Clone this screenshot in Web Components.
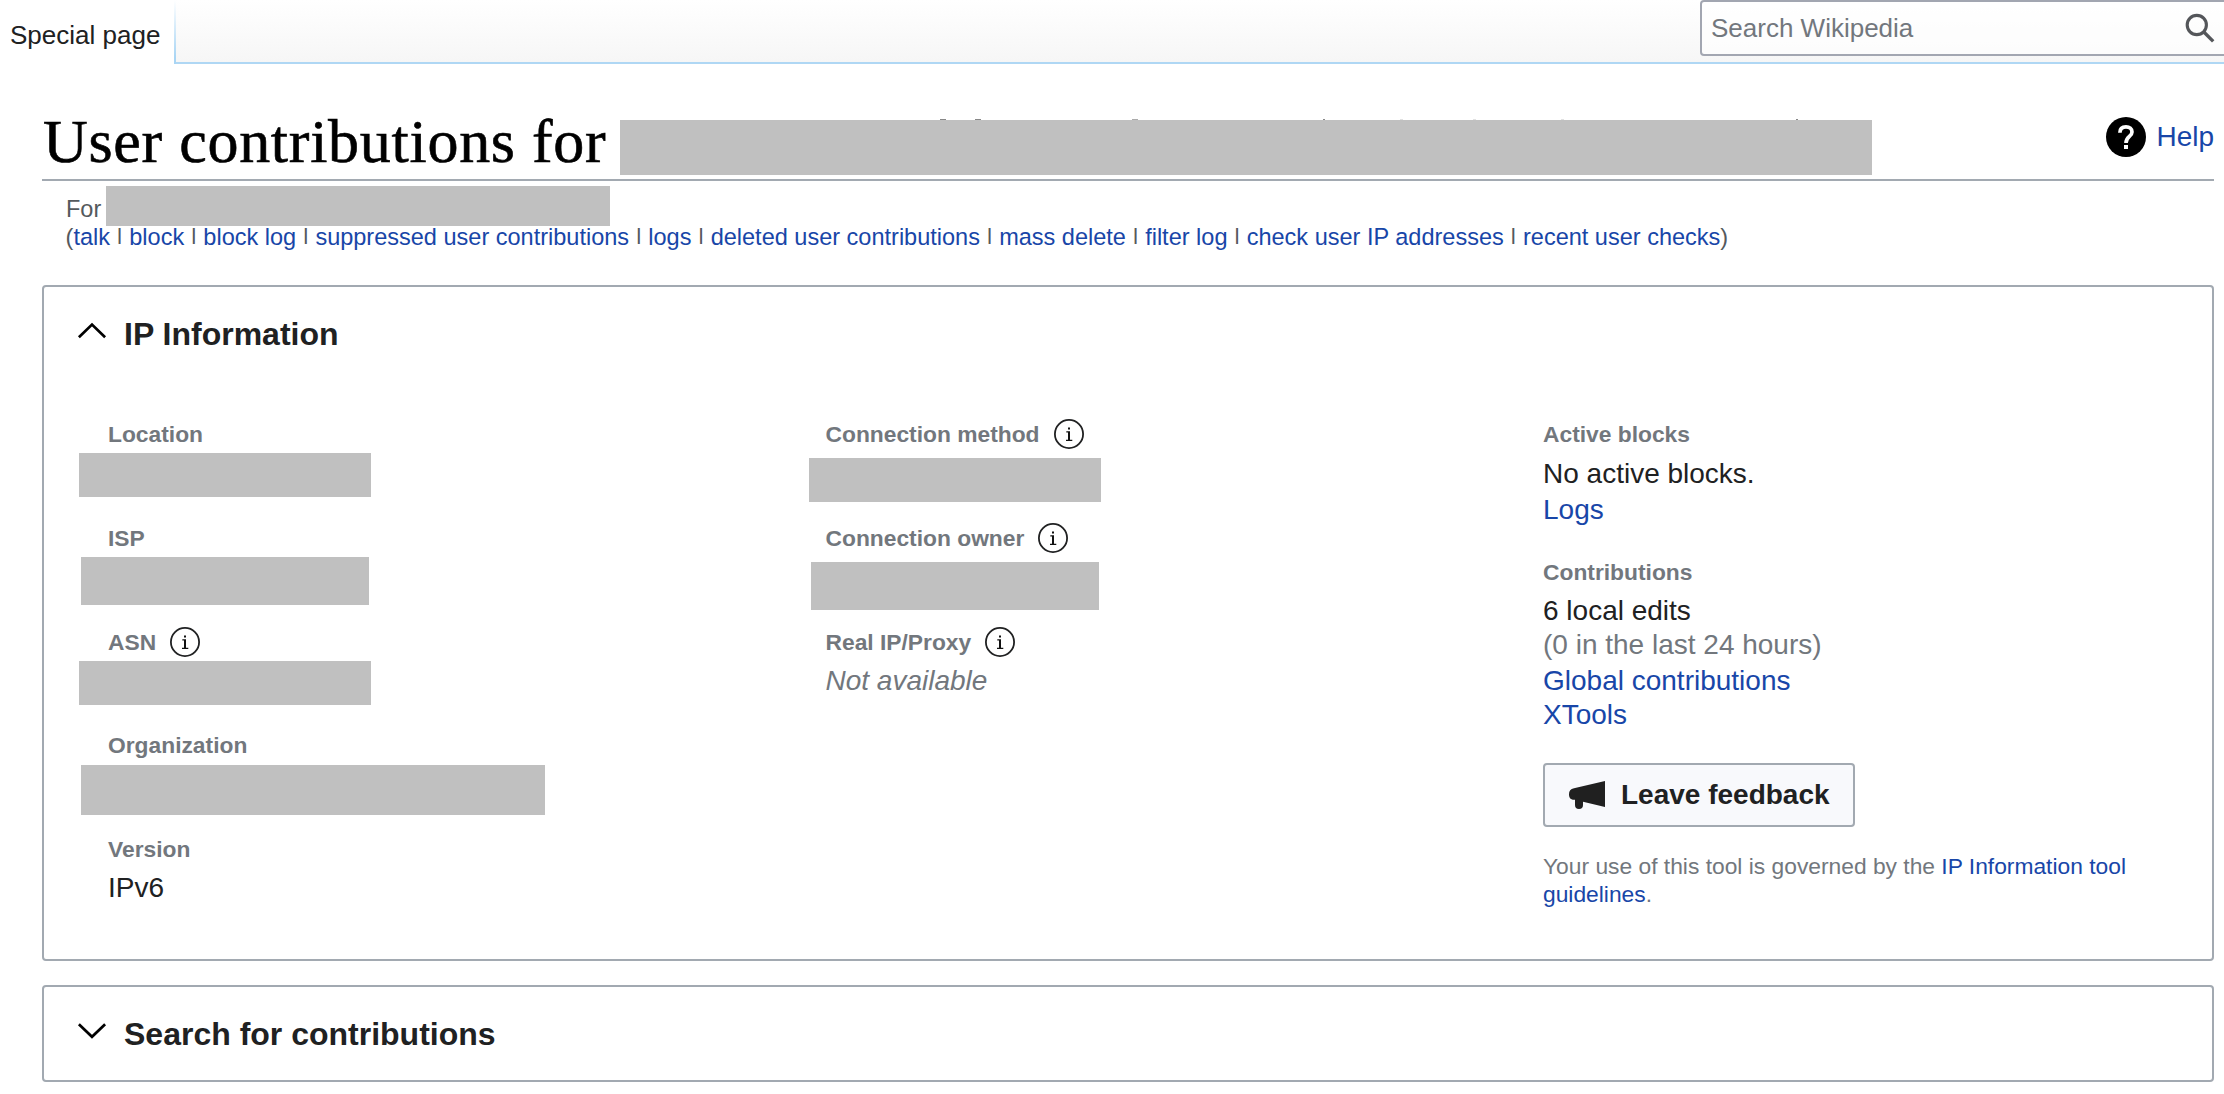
<!DOCTYPE html>
<html lang="en">
<head>
<meta charset="utf-8">
<title>User contributions - Wikipedia</title>
<style>
  body { margin: 0; background: #fff; color: #202122; font-family: "Liberation Sans", Arial, sans-serif; font-size: 28px; overflow: hidden; }
</style>
</head>
<body>
<contributions-page></contributions-page>

<script>
const LINK = 'a { color: #1846a8; text-decoration: none; }';

function define(name, html, setup) {
  const tpl = document.createElement('template');
  tpl.innerHTML = html;
  customElements.define(name, class extends HTMLElement {
    constructor() {
      super();
      this.attachShadow({ mode: 'open' }).append(tpl.content.cloneNode(true));
    }
    connectedCallback() { if (setup) setup(this, this.shadowRoot); }
  });
}

/* Redacted value: a plain grey block */
define('redacted-box', `
  <style>:host { display: block; flex: none; background: #c0c0c0; }</style>`,
  (el) => {
    el.style.width = el.getAttribute('w') + 'px';
    el.style.height = el.getAttribute('h') + 'px';
  });

define('info-icon', `
  <style>:host { display: block; width: 30px; height: 30px; margin: -1px 0; flex: none; } svg { display: block; }</style>
  <svg width="30" height="30" viewBox="0 0 30 30">
    <circle cx="15" cy="15" r="14.1" fill="none" stroke="#202122" stroke-width="1.8"/>
    <path fill="#111" d="M14 8.4h2v2h-2zM12.300 12.300h3.700v8.500h2.300V22h-6.300v-1.200H14v-7.200h-1.700z"/>
  </svg>`);

define('search-box', `
  <style>
    :host { display: flex; box-sizing: border-box; width: 534px; height: 56px; border: 2px solid #a2a6b1; border-radius: 4px; background: rgba(255,255,255,.6); padding-left: 9px; align-items: center; flex: none; margin-right: -10px; }
    span { flex: 1; font-size: 26px; line-height: 30px; color: #72777d; }
    svg { display: block; margin-right: 17px; }
  </style>
  <span><slot></slot></span>
  <svg width="30" height="30" viewBox="0 0 30 30" fill="none" stroke="#54565a">
    <circle cx="11.8" cy="12" r="9.6" stroke-width="3.1"/><path d="M18.6 18.8 28.2 28.4" stroke-width="3.4"/>
  </svg>`);

define('page-tabs', `
  <style>
    :host { display: flex; height: 64px; align-items: flex-start; }
    .tab { width: 174px; box-sizing: border-box; padding: 20px 0 0 10px; height: 64px; font-size: 26px; line-height: 30px; white-space: nowrap; }
    .edge { width: 2px; height: 64px; background: linear-gradient(#fff, #a9d5f4 90%); }
    .bar { flex: 1; height: 62px; border-bottom: 2px solid #afd7f4; background: linear-gradient(#fff, #f6f6f6); display: flex; justify-content: flex-end; }
  </style>
  <div class="tab"><slot></slot></div><div class="edge"></div>
  <div class="bar"><slot name="search"></slot></div>`);

define('help-link', `
  <style>
    :host { display: flex; align-items: center; gap: 10px; height: 40px; }
    ${LINK} a { line-height: 34px; }
    svg { display: block; }
  </style>
  <svg width="40" height="40" viewBox="0 0 40 40">
    <circle cx="20" cy="20" r="20" fill="#000"/>
    <path d="M13.9 15.7C13.9 11.7 16.5 9.900 20 9.900s6 2 6 5.100c0 4.600-6 4.600-6 11" fill="none" stroke="#fff" stroke-width="3.700"/>
    <path d="M18 28h4v4h-4z" fill="#fff"/>
  </svg>
  <a><slot></slot></a>`);

define('page-title', `
  <style>
    :host { display: flex; box-sizing: border-box; height: 80px; border-bottom: 2px solid #a2a9b1; align-items: flex-start; }
    h1 { margin: 5px 0 0; width: 577px; padding-left: 1px; font: 400 62px/70px "Liberation Serif", "Times New Roman", serif; letter-spacing: .72px; color: #000; white-space: nowrap; -webkit-text-stroke: .6px #000; }
    .name { position: relative; margin-top: 19px; }
    /* tops of the ascenders that peek over the redaction */
    i { position: absolute; top: -1px; width: 6px; height: 1px; background: #888; }
    help-link { margin: 16px 0 0 auto; }
  </style>
  <h1><slot></slot></h1>
  <div class="name"><redacted-box w="1252" h="55"></redacted-box>
    <i style="left:320px"></i><i style="left:355px"></i><i style="left:512px;opacity:.7"></i>
    <i style="left:703px;width:2px"></i><i style="left:780px;width:3px;opacity:.25"></i>
    <i style="left:853px;width:3px;opacity:.25"></i><i style="left:941px;width:3px;opacity:.25"></i><i style="left:1176px;width:2px"></i>
  </div>
  <help-link>Help</help-link>`);

define('user-tools', `
  <style>
    :host { display: block; font-size: 23.52px; line-height: 28px; color: #54595d; white-space: nowrap; }
    .for { display: flex; height: 42px; gap: 5px; padding-left: 24px; }
    .for span { width: 35px; padding-top: 14px; }
    redacted-box { margin-top: 5px; }
    .links { padding-left: 23.6px; }
    .bar { display: inline-block; height: 28px; clip-path: inset(0 0 7px 0); vertical-align: top; }
    ${LINK}
  </style>
  <div class="for"><span>For</span><redacted-box w="504" h="40"></redacted-box></div>
  <div class="links"></div>`,
  (el, root) => {
    const out = root.querySelector('.links');
    if (out.childNodes.length) return;
    const items = el.getAttribute('items').split(',');
    out.append('(');
    items.forEach((text, n) => {
      if (n) {
        const bar = document.createElement('span');
        bar.className = 'bar';
        bar.textContent = '|';
        out.append(' ', bar, ' ');
      }
      const a = document.createElement('a');
      a.textContent = text;
      out.append(a);
    });
    out.append(')');
  });

define('fold-panel', `
  <style>
    :host { display: block; box-sizing: border-box; border: 2px solid #a2a9b1; border-radius: 4px; }
    header { display: flex; align-items: flex-start; padding: 29px 0 0 33px; height: 36px; }
    svg { display: block; margin: 4px 17px 0 0; }
    :host(:not([open])) path { transform: scaleY(-1); transform-origin: 0 10.7px; }
    h2 { margin: 0; font-size: 32px; line-height: 36px; font-weight: 700; }
  </style>
  <header>
    <svg width="30" height="24" viewBox="0 0 30 24" fill="none" stroke="#000" stroke-width="2.7"><path d="M1.9 17.2 15 4.6 28.1 17.2"/></svg>
    <h2></h2>
  </header>
  <slot></slot>`,
  (el, root) => { root.querySelector('h2').textContent = el.getAttribute('heading'); });

/* One labelled property; its value is slotted below the label */
define('info-field', `
  <style>
    :host { display: block; }
    .label { display: flex; align-items: center; height: 28px; font-size: 22.8px; line-height: 28px; font-weight: 700; color: #72777d; white-space: nowrap; gap: 14px; }
    info-icon { display: none; }
    :host([info]) info-icon { display: block; }
  </style>
  <div class="label"><span></span><info-icon></info-icon></div>
  <slot></slot>`,
  (el, root) => { root.querySelector('span').textContent = el.getAttribute('label'); });

define('feedback-button', `
  <style>
    :host { display: flex; box-sizing: border-box; width: 312px; height: 64px; border: 2px solid #a2a9b1; border-radius: 4px; background: #f8f9fc; padding-left: 24px; align-items: center; font-weight: 700; line-height: 34px; white-space: nowrap; }
    svg { display: block; margin-right: 16px; flex: none; }
  </style>
  <svg width="36" height="28" viewBox="0 0 36 28" fill="#202020">
    <path d="M36 0v26L14 20.8V24a4 4 0 0 1-8 0v-5.300H5C1.500 18.700 0 16.500 0 13.200S1.500 8 5 7.300z"/>
  </svg>
  <slot></slot>`);

define('ip-information', `
  <style>
    :host { display: grid; grid-template-columns: 717.5px 717.5px 620px; padding: 68px 0 0 64px; height: 539px; box-sizing: border-box; }
    p { margin: 0; line-height: 35px; }
    ${LINK}
    .muted { color: #72777d; }
    .note { font-size: 22.8px; line-height: 28px; color: #72777d; }
  </style>
  <div>
    <info-field label="Location" style="height:104px"><redacted-box w="292" h="44" style="margin:5px 0 0 -29px"></redacted-box></info-field>
    <info-field label="ISP" style="height:104px"><redacted-box w="288" h="48" style="margin:5px 0 0 -27px"></redacted-box></info-field>
    <info-field label="ASN" info style="height:103px"><redacted-box w="292" h="44" style="margin:5px 0 0 -29px"></redacted-box></info-field>
    <info-field label="Organization" style="height:104px"><redacted-box w="464" h="50" style="margin:6px 0 0 -27px"></redacted-box></info-field>
    <info-field label="Version"><p style="margin-top:7px">IPv6</p></info-field>
  </div>
  <div>
    <info-field label="Connection method" info style="height:104px"><redacted-box w="292" h="44" style="margin:10px 0 0 -16.5px"></redacted-box></info-field>
    <info-field label="Connection owner" info style="height:104px"><redacted-box w="288" h="48" style="margin:10px 0 0 -14.5px"></redacted-box></info-field>
    <info-field label="Real IP/Proxy" info><p class="muted" style="margin-top:7px"><em>Not available</em></p></info-field>
  </div>
  <div>
    <info-field label="Active blocks" style="height:138px"><p style="margin-top:8px">No active blocks.</p><p style="margin-top:1px"><a>Logs</a></p></info-field>
    <info-field label="Contributions" style="height:205px">
      <p style="margin-top:7px">6 local edits</p>
      <p class="muted" style="margin-top:-1px">(0 in the last 24 hours)</p>
      <p style="margin-top:1px"><a>Global contributions</a></p>
      <p style="margin-top:-1px"><a>XTools</a></p>
    </info-field>
    <feedback-button>Leave feedback</feedback-button>
    <p class="note" style="margin-top:25px">Your use of this tool is governed by the <a>IP Information tool<br>guidelines</a>.</p>
  </div>`);

define('contributions-page', `
  <style>
    :host { display: flex; flex-direction: column; height: 1094px; overflow: hidden; }
    main { padding: 37px 10px 0 42px; }
    user-tools { margin-bottom: 34px; }
    .one { height: 676px; margin-bottom: 24px; }
    .two { height: 97px; }
  </style>
  <page-tabs>Special page<search-box slot="search">Search Wikipedia</search-box></page-tabs>
  <main>
    <page-title>User contributions for</page-title>
    <user-tools items="talk,block,block log,suppressed user contributions,logs,deleted user contributions,mass delete,filter log,check user IP addresses,recent user checks"></user-tools>
    <fold-panel class="one" open heading="IP Information"><ip-information></ip-information></fold-panel>
    <fold-panel class="two" heading="Search for contributions"></fold-panel>
  </main>`);
</script>
</body>
</html>
